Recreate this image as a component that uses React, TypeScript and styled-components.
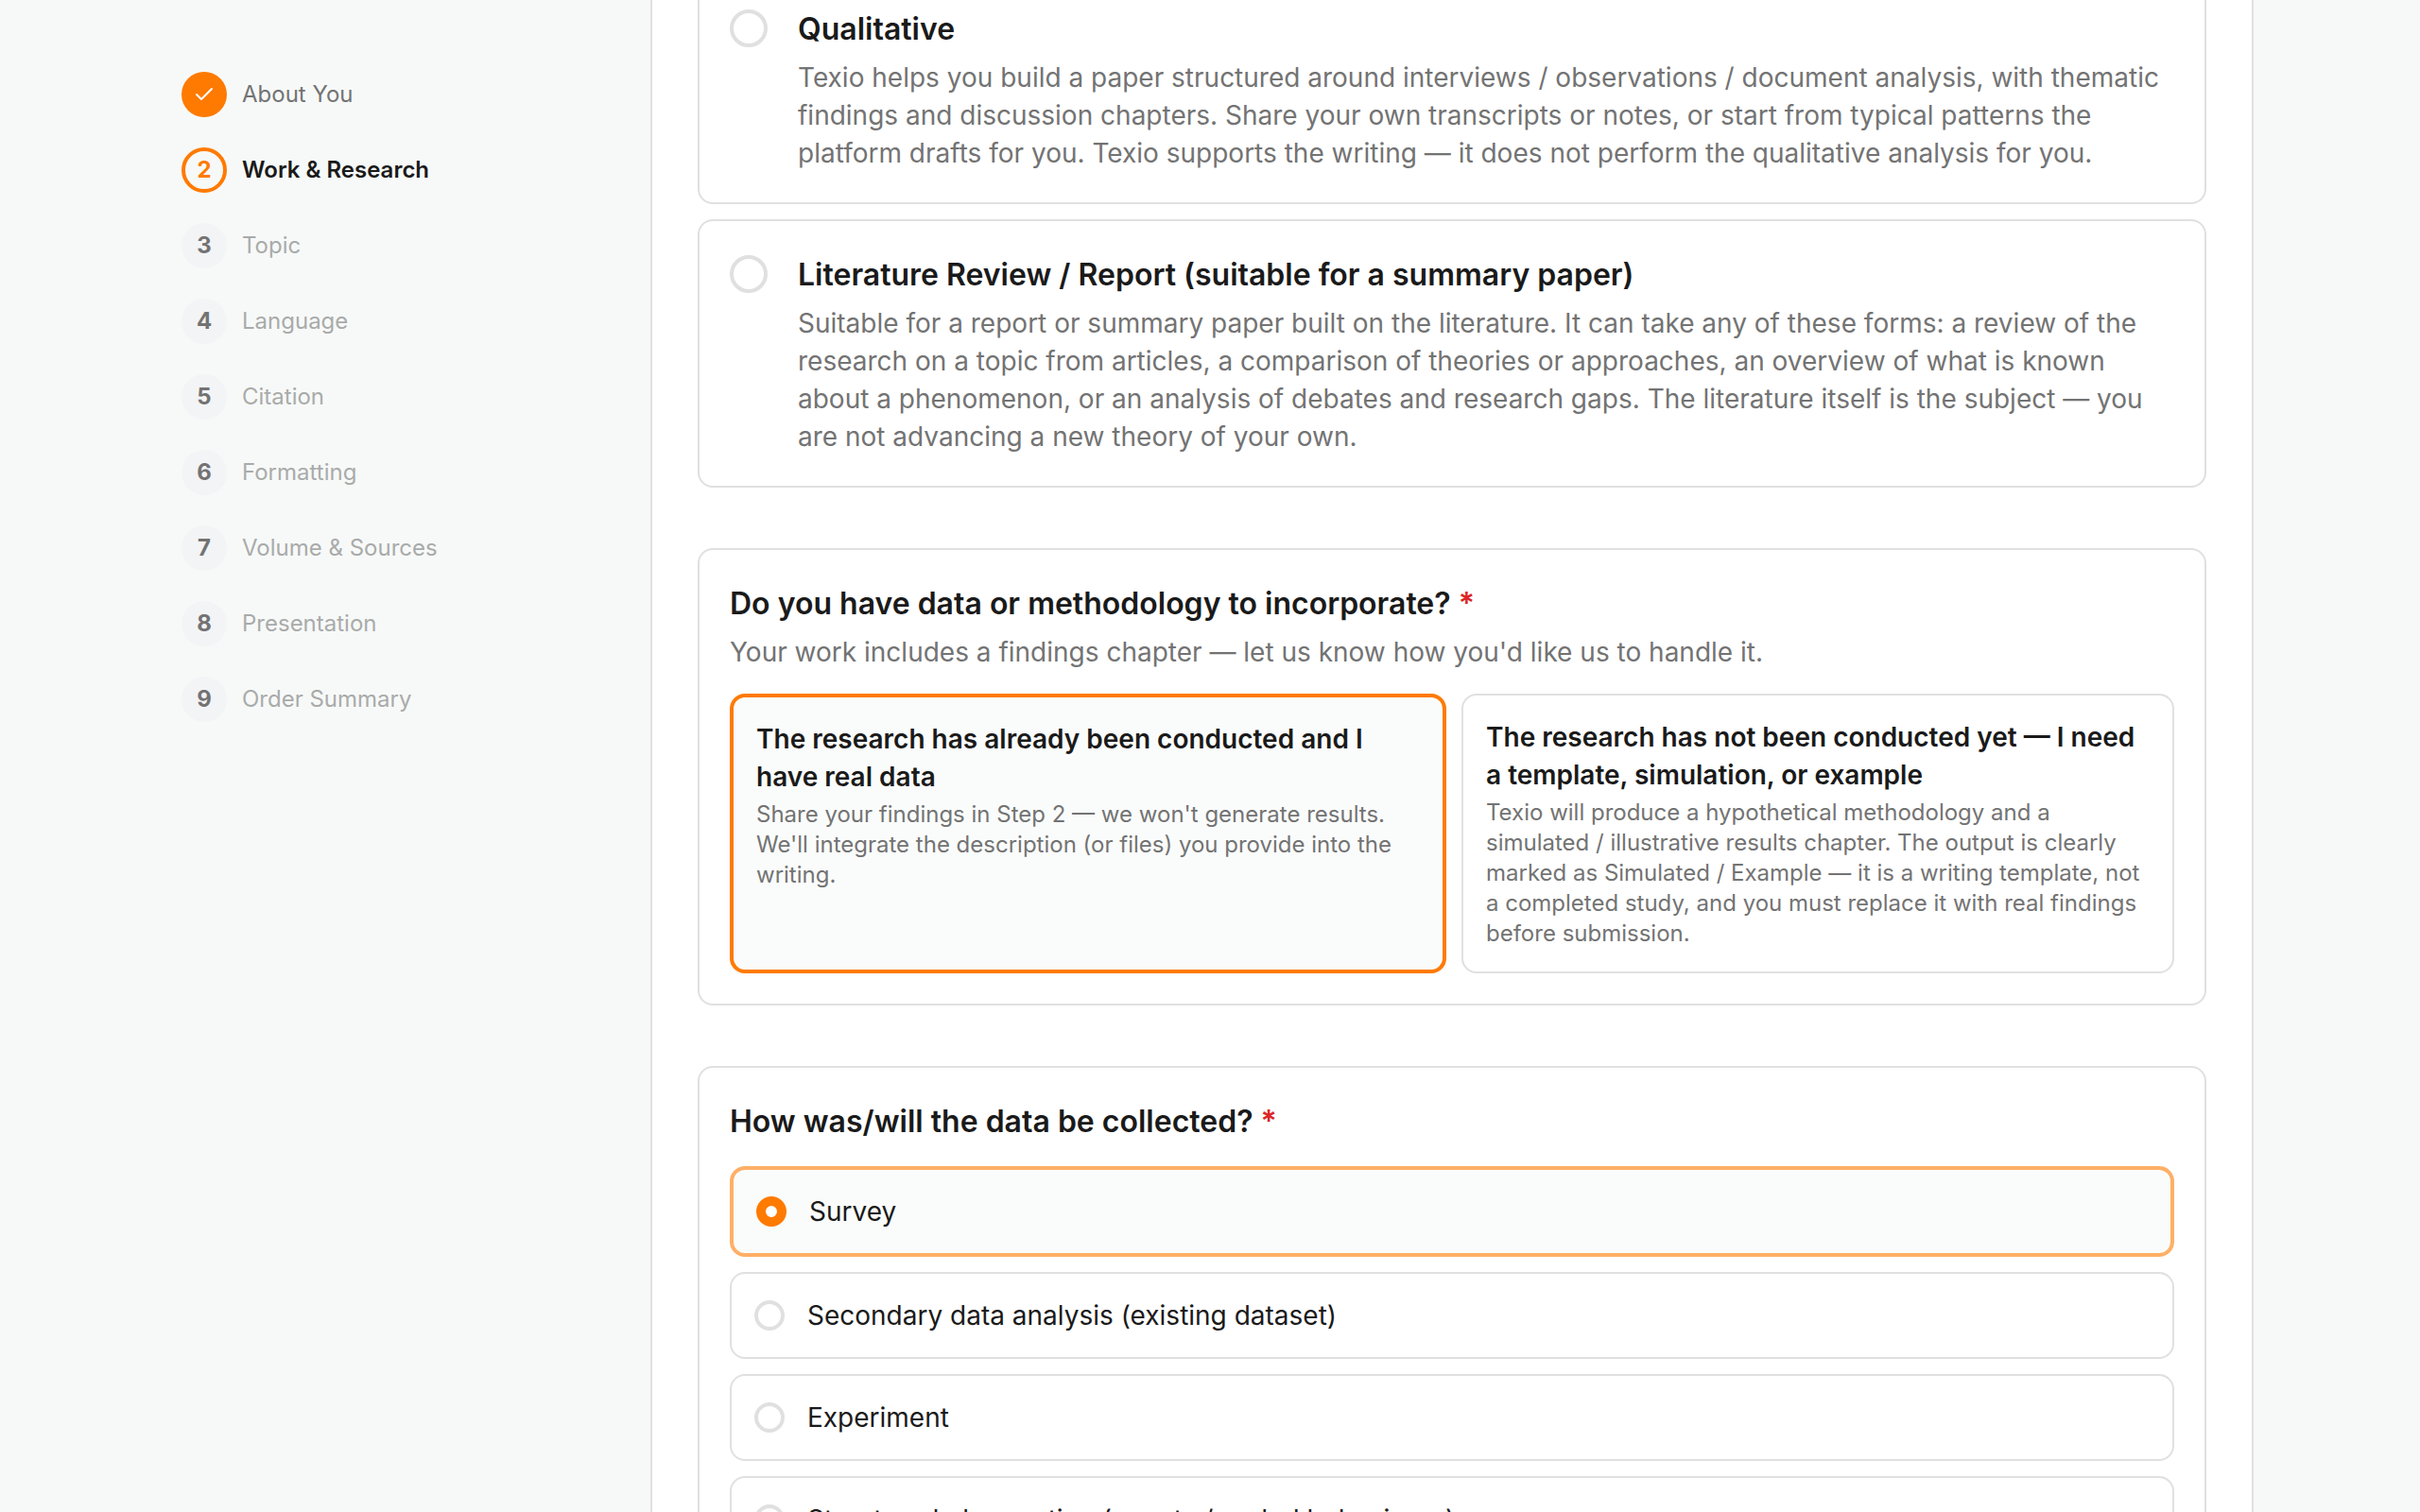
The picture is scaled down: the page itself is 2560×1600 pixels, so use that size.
import React from "react";
import styled, { createGlobalStyle, css } from "styled-components";
import { Check } from "lucide-react";

const color = {
  page: "#f7f9f8",
  surface: "#ffffff",
  tint: "#fafcfb",
  line: "#e0e0e0",
  ink: "#1a1a1a",
  muted: "#737373",
  accent: "#ff7a00",
  accentSoft: "#ffaf66",
  bubble: "#f3f4f6",
  required: "#dc2626",
};

const GlobalStyle = createGlobalStyle`
  *, *::before, *::after { box-sizing: border-box; }
  html, body { margin: 0; padding: 0; background: ${color.page}; overflow: hidden; }
  body {
    font-family: Inter, "Liberation Sans", sans-serif;
    font-size: 28px;
    line-height: 40px;
    color: ${color.ink};
  }
  h3, p, ol { margin: 0; padding: 0; }
`;

const Page = styled.div`
  display: flex;
  justify-content: space-between;
  height: 1600px;
  padding: 0 176px;
  overflow: hidden;
`;

const Sidebar = styled.nav`
  padding: 76px 16px 0;
`;

const StepList = styled.ol`
  display: flex;
  flex-direction: column;
  gap: 32px;
  list-style: none;
`;

type StepState = "done" | "current" | "upcoming";

const Step = styled.li<{ $state: StepState }>`
  display: flex;
  align-items: center;
  gap: 16px;
  font-size: 24px;
  line-height: 32px;
  white-space: nowrap;
  color: ${({ $state }) => ($state === "current" ? color.ink : $state === "done" ? color.muted : "#a9abaa")};
  font-weight: ${({ $state }) => ($state === "current" ? 600 : 400)};
`;

const Bubble = styled.span<{ $state: StepState }>`
  display: flex;
  align-items: center;
  justify-content: center;
  width: 48px;
  height: 48px;
  border-radius: 50%;
  font-weight: 700;
  color: ${color.muted};
  background: ${color.bubble};
  ${({ $state }) =>
    $state === "done" &&
    css`
      color: #fff;
      background: ${color.accent};
    `}
  ${({ $state }) =>
    $state === "current" &&
    css`
      color: ${color.accent};
      background: transparent;
      border: 4px solid ${color.accent};
    `}
`;

const Panel = styled.main`
  width: 1696px;
  padding: 0 48px;
  background: ${color.surface};
  border: solid ${color.line};
  border-width: 0 2px;
`;

/* The form is scrolled, so its first visible card starts above the viewport. */
const Form = styled.div`
  display: flex;
  flex-direction: column;
  gap: 64px;
  margin-top: -28px;
`;

const CardStack = styled.div`
  display: flex;
  flex-direction: column;
  gap: 16px;
`;

const Card = styled.section`
  padding: 32px;
  background: ${color.surface};
  border: 2px solid ${color.line};
  border-radius: 16px;
`;

const ChoiceCard = styled(Card)`
  display: flex;
  gap: 32px;
`;

const Radio = styled.span<{ $size: number; $checked?: boolean }>`
  flex: none;
  width: ${({ $size }) => $size}px;
  height: ${({ $size }) => $size}px;
  border-radius: 50%;
  background: ${color.surface};
  border: ${({ $checked }) => ($checked ? `10px solid ${color.accent}` : `4px solid ${color.line}`)};
`;

const ChoiceRadio = styled(Radio)`
  margin-top: 4px;
`;

const Title = styled.h3`
  padding-top: 2px;
  font-size: 32px;
  line-height: 46px;
  font-weight: 600;
`;

const Required = styled.span`
  color: ${color.required};
`;

const Description = styled.p`
  margin-top: 8px;
  color: ${color.muted};
`;

const Tiles = styled.div`
  display: flex;
  gap: 16px;
  margin-top: 24px;
`;

const selectedBox = css<{ $selected?: boolean; $edge?: string }>`
  border: 2px solid ${color.line};
  border-radius: 16px;
  background: ${color.surface};
  ${({ $selected, $edge }) =>
    $selected &&
    css`
      border: 4px solid ${$edge ?? color.accent};
      background: ${color.tint};
    `}
`;

const Tile = styled.div<{ $selected?: boolean; $edge?: string }>`
  flex: 1;
  padding: 24px;
  ${selectedBox}
`;

const TileTitle = styled.p`
  font-weight: 600;
`;

const TileText = styled.p`
  margin-top: 4px;
  font-size: 24px;
  line-height: 32px;
  color: ${color.muted};
`;

const Options = styled.div`
  display: flex;
  flex-direction: column;
  gap: 16px;
  margin-top: 24px;
`;

const Option = styled.label<{ $selected?: boolean; $edge?: string }>`
  display: flex;
  align-items: center;
  gap: 24px;
  padding: 24px;
  ${selectedBox}
`;

const steps = [
  "About You",
  "Work & Research",
  "Topic",
  "Language",
  "Citation",
  "Formatting",
  "Volume & Sources",
  "Presentation",
  "Order Summary",
];

const approaches = [
  {
    title: "Qualitative",
    text: "Texio helps you build a paper structured around interviews / observations / document analysis, with thematic findings and discussion chapters. Share your own transcripts or notes, or start from typical patterns the platform drafts for you. Texio supports the writing — it does not perform the qualitative analysis for you.",
  },
  {
    title: "Literature Review / Report (suitable for a summary paper)",
    text: "Suitable for a report or summary paper built on the literature. It can take any of these forms: a review of the research on a topic from articles, a comparison of theories or approaches, an overview of what is known about a phenomenon, or an analysis of debates and research gaps. The literature itself is the subject — you are not advancing a new theory of your own.",
  },
];

const tiles = [
  {
    title: "The research has already been conducted and I have real data",
    text: "Share your findings in Step 2 — we won't generate results. We'll integrate the description (or files) you provide into the writing.",
  },
  {
    title: "The research has not been conducted yet — I need a template, simulation, or example",
    text: "Texio will produce a hypothetical methodology and a simulated / illustrative results chapter. The output is clearly marked as Simulated / Example — it is a writing template, not a completed study, and you must replace it with real findings before submission.",
  },
];

const methods = [
  "Survey",
  "Secondary data analysis (existing dataset)",
  "Experiment",
  "Structured observation (counts / coded behaviours)",
];

export default function App() {
  return (
    <>
      <GlobalStyle />
      <Page>
        <Sidebar>
          <StepList>
            {steps.map((label, i) => {
              const state: StepState = i === 0 ? "done" : i === 1 ? "current" : "upcoming";
              return (
                <Step key={label} $state={state}>
                  <Bubble $state={state}>{state === "done" ? <Check size={24} /> : i + 1}</Bubble>
                  {label}
                </Step>
              );
            })}
          </StepList>
        </Sidebar>
        <Panel>
          <Form>
            <CardStack>
              {approaches.map((a) => (
                <ChoiceCard key={a.title}>
                  <ChoiceRadio $size={40} />
                  <div>
                    <Title>{a.title}</Title>
                    <Description>{a.text}</Description>
                  </div>
                </ChoiceCard>
              ))}
            </CardStack>
            <Card>
              <Title>
                Do you have data or methodology to incorporate? <Required>*</Required>
              </Title>
              <Description>
                Your work includes a findings chapter — let us know how you'd like us to handle it.
              </Description>
              <Tiles>
                {tiles.map((t, i) => (
                  <Tile key={t.title} $selected={i === 0}>
                    <TileTitle>{t.title}</TileTitle>
                    <TileText>{t.text}</TileText>
                  </Tile>
                ))}
              </Tiles>
            </Card>
            <Card>
              <Title>
                How was/will the data be collected? <Required>*</Required>
              </Title>
              <Options>
                {methods.map((m, i) => (
                  <Option key={m} $selected={i === 0} $edge={color.accentSoft}>
                    <Radio $size={32} $checked={i === 0} />
                    {m}
                  </Option>
                ))}
              </Options>
            </Card>
          </Form>
        </Panel>
      </Page>
    </>
  );
}
